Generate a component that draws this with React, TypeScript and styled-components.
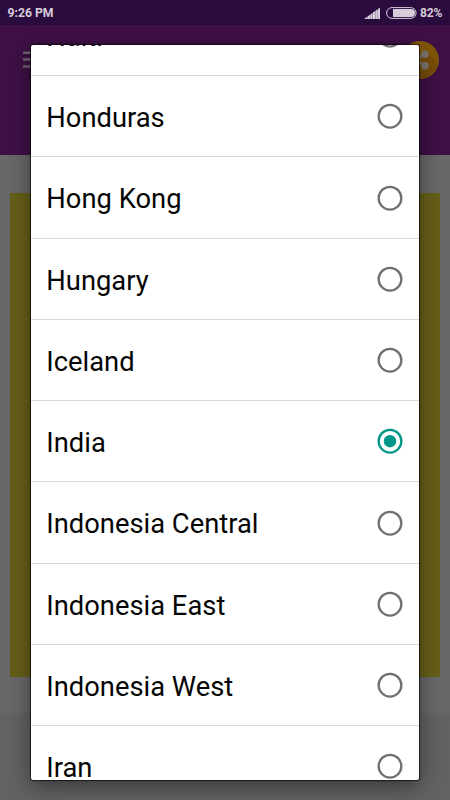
import React from "react";
import styled, { createGlobalStyle } from "styled-components";

const GlobalStyle = createGlobalStyle`
  * { box-sizing: border-box; }
  body { margin: 0; font-family: Roboto, "Liberation Sans", sans-serif; }
`;

const Screen = styled.div`
  position: relative;
  display: flex;
  flex-direction: column;
  width: 450px;
  height: 800px;
  overflow: hidden;
  background: #686868;
`;

const StatusBar = styled.div`
  display: flex;
  align-items: center;
  justify-content: space-between;
  flex: none;
  height: 25px;
  padding: 1px 8px 0 7.5px;
  background: #290b3d;
  color: #d5cdda;
  font-size: 12.2px;
  line-height: 24px;
  font-weight: 700;
`;

const StatusIcons = styled.div`
  display: flex;
  align-items: center;
  svg { display: block; }
`;

const Signal = styled.svg`
  margin-right: 5px;
`;

const Battery = styled.svg`
  margin-right: 3px;
`;

const Percent = styled.span`
  font-size: 12px;
  letter-spacing: -0.25px;
`;

const AppHeader = styled.header`
  display: flex;
  justify-content: space-between;
  align-items: flex-start;
  flex: none;
  height: 130px;
  padding: 16px 11px 0 23px;
  background: #3e1046;
`;

const MenuIcon = styled.svg`
  margin-top: 10px;
`;

const Content = styled.main`
  flex: none;
  height: 558px;
  padding: 38px 10px 0;
`;

const Card = styled.div`
  height: 484px;
  background: #665f18;
`;

const Footer = styled.div`
  flex: 1;
  background: #626262;
`;

const Dialog = styled.div`
  position: absolute;
  left: 31px;
  top: 45px;
  width: 388px;
  height: 735px;
  overflow: hidden;
  border-radius: 2px;
  background: #fff;
  box-shadow: 0 0 1px 1px rgba(0, 0, 0, 0.65), 0 6px 22px rgba(0, 0, 0, 0.45);
`;

const List = styled.div`
  display: flex;
  flex-direction: column;
  margin-top: -50.1px;
`;

const Row = styled.label`
  display: flex;
  align-items: center;
  justify-content: space-between;
  flex: none;
  height: 81.25px;
  padding: 0 16px 0 15.3px;
  border-bottom: 1px solid #dadada;
`;

const Name = styled.span`
  padding-top: 3.9px;
  color: #050505;
  font-size: 27.35px;
  line-height: 32px;
  white-space: nowrap;
`;

const RadioIcon = styled.svg<{ $on: boolean }>`
  display: block;
  color: ${(p) => (p.$on ? "#009688" : "#707070")};
`;

const countries = [
  "Haiti",
  "Honduras",
  "Hong Kong",
  "Hungary",
  "Iceland",
  "India",
  "Indonesia Central",
  "Indonesia East",
  "Indonesia West",
  "Iran",
];

function Radio({ on }: { on: boolean }) {
  return (
    <RadioIcon $on={on} width="26" height="26" viewBox="0 0 26 26" fill="none">
      <circle cx="13" cy="13.2" r="11.35" stroke="currentColor" strokeWidth="2.3" />
      {on && <circle cx="13" cy="13.2" r="6.2" fill="currentColor" />}
    </RadioIcon>
  );
}

export default function App() {
  return (
    <Screen>
      <GlobalStyle />
      <StatusBar>
        <span>9:26 PM</span>
        <StatusIcons>
          <Signal width="17" height="12" viewBox="0 0 17 12" fill="#d5cdda">
            <path opacity="0.5" d="M0.5 12L16 0.7V12Z" />
            <path d="M0.5 12V11.2L3 9.9V12ZM3.5 12V9.4L6 7.8V12ZM6.5 12V7.4L8.5 6V12ZM9 12V5.5L11 4.2V12ZM11.5 12V3.7L13.5 2.4V12ZM14 12V2L16 0.7V12Z" />
          </Signal>
          <Battery width="31" height="12" viewBox="0 0 31 12">
            <rect x="0.6" y="0.6" width="29.5" height="10.8" rx="5.4" fill="none" stroke="#d5cdda" strokeWidth="1" />
            <path d="M7 2H25a4 4 0 0 1 0 8H7Z" fill="#d5cdda" />
          </Battery>
          <Percent>82%</Percent>
        </StatusIcons>
      </StatusBar>
      <AppHeader>
        <MenuIcon width="22" height="18" viewBox="0 0 22 18" fill="#6d656e">
          <path d="M0 0.5H22V3H0ZM0 7.3H22V9.8H0ZM0 14.2H22V16.7H0Z" />
        </MenuIcon>
        <svg width="38" height="38" viewBox="0 0 38 38">
          <circle cx="19" cy="19" r="19" fill="#835607" />
          <path d="M26 11L37 23.5A19 19 0 0 1 19 38L11 30Z" fill="#784d07" />
          <path d="M24 13L13 19L24 24.7" fill="none" stroke="#7b756f" strokeWidth="2.6" />
          <g fill="#7b756f">
            <circle cx="24" cy="13.2" r="3.7" />
            <circle cx="13" cy="19" r="3.7" />
            <circle cx="24" cy="24.7" r="3.7" />
          </g>
        </svg>
      </AppHeader>
      <Content>
        <Card />
      </Content>
      <Footer />
      <Dialog role="dialog">
        <List role="radiogroup">
          {countries.map((country) => (
            <Row key={country}>
              <Name>{country}</Name>
              <Radio on={country === "India"} />
            </Row>
          ))}
        </List>
      </Dialog>
    </Screen>
  );
}
